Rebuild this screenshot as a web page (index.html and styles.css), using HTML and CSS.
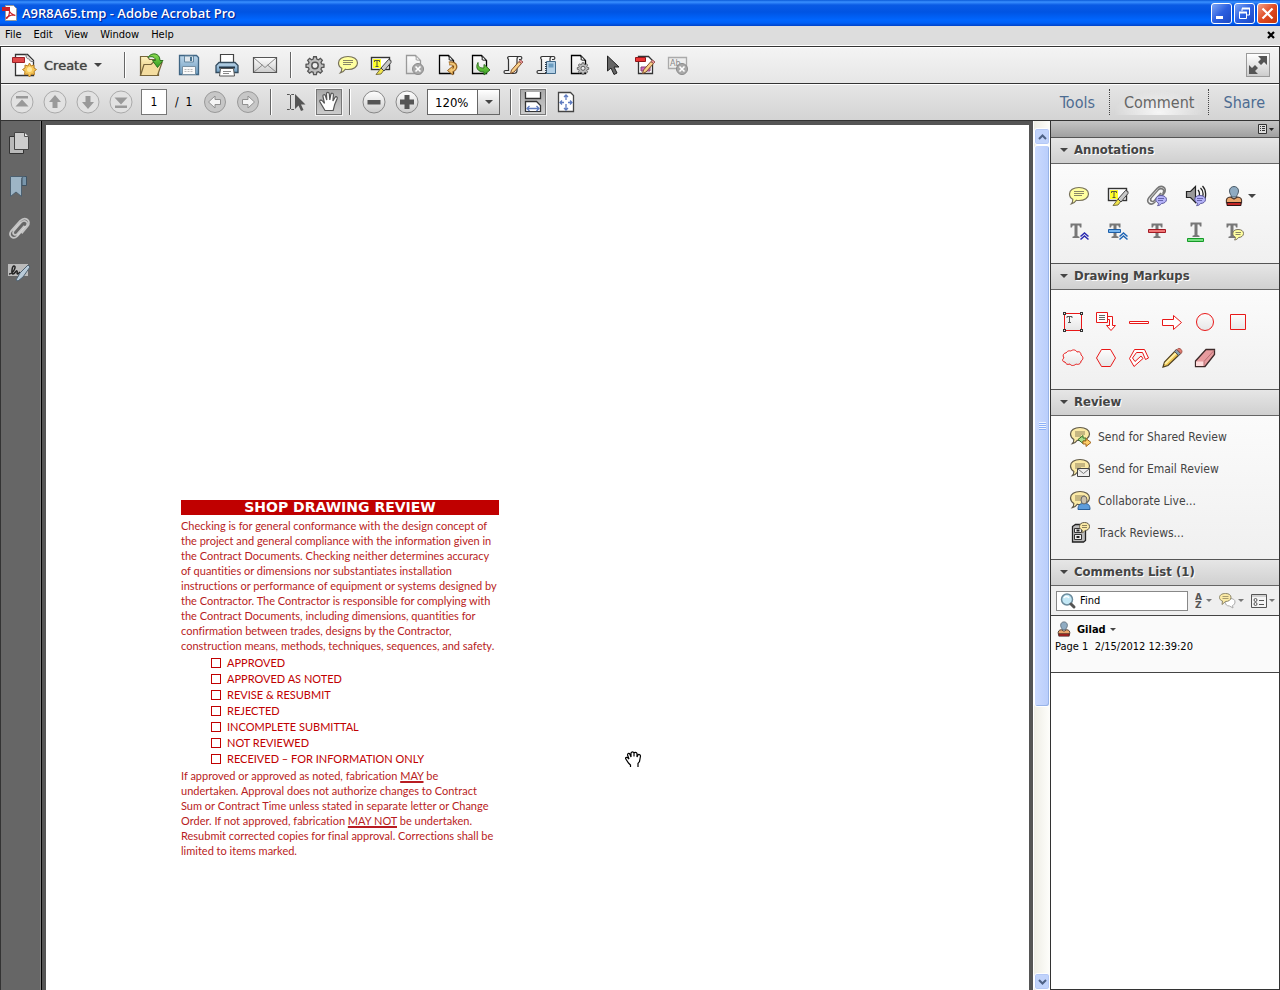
FILE: index.html
```
<!DOCTYPE html>
<html lang="en">
<head>
    <meta charset="UTF-8">
    <meta name="viewport" content="width=device-width, initial-scale=1.0">
    <title>A9R8A65.tmp - Adobe Acrobat Pro</title>
    <link rel="stylesheet" href="styles.css">
</head>
<body>
    <!-- Shared icon parts -->
    <svg class="defs" width="0" height="0" aria-hidden="true">
        <defs>
            <linearGradient id="g-silver" x1="0" y1="0" x2="0" y2="1"><stop offset="0" stop-color="#fff"/><stop offset="1" stop-color="#ccc"/></linearGradient>
            <linearGradient id="g-light" x1="0" y1="0" x2="0" y2="1"><stop offset="0" stop-color="#fdfdfd"/><stop offset="1" stop-color="#e6e6e6"/></linearGradient>
            <linearGradient id="g-folder" x1="0" y1="0" x2="0" y2="1"><stop offset="0" stop-color="#fff3c0"/><stop offset="1" stop-color="#dfc070"/></linearGradient>
            <linearGradient id="g-green" x1="0" y1="0" x2="0" y2="1"><stop offset="0" stop-color="#8ede50"/><stop offset="1" stop-color="#2f9a20"/></linearGradient>
            <linearGradient id="g-blue" x1="0" y1="0" x2="0" y2="1"><stop offset="0" stop-color="#bcd6ea"/><stop offset="1" stop-color="#6d9cc0"/></linearGradient>
        </defs>
        <symbol id="doc" viewBox="0 0 24 24">
            <path d="M4.500 2.500h9l5 5v13h-14z" fill="url(#g-light)" stroke="currentColor" stroke-width="1.300"/>
            <path d="M13.500 2.500c1.500 2 0 4 1 4.500s2.500-.500 4 1" fill="#eee" stroke="currentColor"/>
        </symbol>
        <symbol id="bubble" viewBox="0 0 24 24">
            <path d="M12 3.500c5.500 0 9.500 2.700 9.500 6.500s-4 6.500-9.500 6.500c-1 0-2 0-2.700-.2-1.200 2-2.800 3.200-5 3.500 1.200-1.200 1.600-2.700 1.500-4.500C3.700 14.200 2.500 12.400 2.500 10c0-3.800 4-6.500 9.500-6.500z" fill="#ffffa0" stroke="#77715a" stroke-width="1.200"/>
            <path d="M7 7.500h10M7 9.500h10M7 11.500h8" stroke="#8a8768"/>
        </symbol>
        <symbol id="tan-bubble" viewBox="0 0 24 24">
            <path d="M11 2.500c5.500 0 9.500 2.500 9.500 6.500 0 3.800-4 6.500-9.500 6.500-1 0-2 0-2.700-.2-1.200 2-2.800 3-5 3.300 1.200-1.200 1.600-2.700 1.500-4.200C2.700 13 1.500 11.200 1.500 9c0-4 4-6.500 9.500-6.500z" fill="#fbeaa6" stroke="#605a4a" stroke-width="1.200"/>
            <path d="M6 7h10M6 9h10M6 11h6" stroke="#8f825c"/>
        </symbol>
        <symbol id="gear" viewBox="0 0 24 24">
            <path d="M10.500 3h3l.5 2.600 1.700.7 2.200-1.500 2.100 2.100-1.500 2.200.7 1.700 2.600.5v3l-2.600.5-.7 1.700 1.500 2.200-2.100 2.100-2.200-1.500-1.700.7-.5 2.600h-3l-.5-2.600-1.700-.7-2.200 1.500L4 18.700l1.500-2.200-.7-1.700-2.600-.5v-3l2.600-.5.7-1.700L4 6.900l2.100-2.100 2.200 1.500 1.700-.7z" fill="#bdbdbd" stroke="#555" stroke-width="1.400"/>
            <circle cx="12" cy="12.500" r="3.500" fill="#eee" stroke="#555" stroke-width="1.600"/>
        </symbol>
        <symbol id="marker" viewBox="0 0 24 24">
            <rect x="2.500" y="4.500" width="18" height="12" fill="#fff" stroke="#333" stroke-width="1.400"/>
            <rect x="4" y="6" width="8" height="9" fill="#ffff2a"/>
            <path d="M5.500 9V7.500h5V9M8 7.500v6M6.500 13.500h3" fill="none" stroke="#554"/>
            <path d="M9 19l3-4 3 2-3 4-5 .5z" fill="#f1e44a" stroke="#777043"/>
            <path d="M12 15l7.500-8.500 2.500 1v2L15 18z" fill="#c9c9c9" stroke="#444"/>
        </symbol>
        <symbol id="xbadge" viewBox="0 0 24 24">
            <circle cx="16" cy="16" r="5.500" fill="#a9a9a9" stroke="#8a8a8a"/>
            <path d="M13.500 13.500l5 5M18.500 13.500l-5 5" stroke="#fff" stroke-width="1.600"/>
        </symbol>
        <symbol id="pencil" viewBox="0 0 24 24">
            <path d="M9.500 20.500l1-3.500 7.500-8.500 2.500 2-7.500 8.500z" fill="#f8cf88" stroke="#80502c"/>
            <path d="M18 8.500l1.500-1.500 2.500 2-1.500 1.500z" fill="#e99" stroke="#955"/>
        </symbol>
        <symbol id="scroll" viewBox="0 0 24 24">
            <path d="M7.500 3.500h10.500v13c0 3-2 4-3.500 4H4.500c-2 0-2-3 0-3h3z" fill="url(#g-light)"/>
            <path d="M18 6.500h1.500c1.800 0 1.800-3 0-3H8.500c-2 0-2.500 1.500-1 3v11h-3c-2 0-2 3 0 3h8c2 0 3.500-1 3.500-3v-11c0-2 .5-3 2-3" fill="none" stroke="#333" stroke-width="1.200"/>
        </symbol>
        <symbol id="tee" viewBox="0 0 24 24">
            <path d="M3.500 3.500h11v4h-1.500l-.7-2h-1.800v10.500l2 .7v1.300H5.500v-1.300l2-.7V5.500H5.700L5 7.500H3.500z" fill="#777"/>
        </symbol>
        <symbol id="violet" viewBox="0 0 24 24">
            <path d="M16 11.500c3 0 5.500 1.500 5.500 4s-2.500 4-5 4c-1 1.500-2 2-4 2.200.8-.8 1-1.500.8-2.700-1.600-.7-2.500-2-2.500-3.500 0-2.500 2-4 5.200-4z" fill="#b4b2f8" stroke="#5d5a9c"/>
            <path d="M13 14.500h6M13 16.500h5" stroke="#6663ac"/>
        </symbol>
        <symbol id="clip" viewBox="0 0 24 24">
            <path d="M6 14l7-8c3-3 7.500-.5 5 3l-8.500 9.500c-4 4-9-.5-5.500-5L12 4.500c4.500-4.500 11-.5 7 5L13.500 16M6 14c-1.500 3 1.500 4.500 3.500 2.500L16 9" fill="none" stroke="currentColor" stroke-width="1.600"/>
            <path d="M5 14L12.500 5.500M9.500 18l8-9" stroke="#ddd" stroke-width=".7"/>
        </symbol>
        <symbol id="stamp" viewBox="0 0 24 24">
            <path d="M9.500 13c0-2-2-3-2-6 0-6 9-6 9 0 0 3-2 4-2 6z" fill="#8fabc2" stroke="#4b5b68"/>
            <path d="M4.500 19c-1-4 1-6 4-6l3.500 2 3.500-2c3 0 5 2 4 6z" fill="#eaa66c" stroke="#47342b" stroke-width="1.200"/>
            <path d="M5 18.500h14v3H5z" fill="#c52626" stroke="#2e1717"/>
        </symbol>
        <symbol id="nav-disc" viewBox="0 0 24 24">
            <circle cx="12" cy="12" r="11" fill="#e2e2e2" stroke="#aaa"/>
        </symbol>
    </svg>

    <header class="titlebar">
        <svg class="app-icon" width="16" height="18" viewBox="0 0 16 18">
            <path d="M3.500 1.500h8l3 3v12h-11z" fill="#fff" stroke="#999"/>
            <path d="M0 3h8v4H0z" fill="#c92127"/>
            <path d="M7.500 7.500c0 3-1.500 6.500-3 7-1.500-.5 4-4 8-3.500 2 1-3-.2-5-3.500z" fill="none" stroke="#c92127" stroke-width="1.200"/>
        </svg>
        <h1>A9R8A65.tmp - Adobe Acrobat Pro</h1>
        <div class="window-buttons">
            <button type="button" aria-label="Minimize"><svg width="19" height="19" viewBox="0 0 19 19"><path d="M4 12h7v3H4z" fill="#fff"/></svg></button>
            <button type="button" aria-label="Restore"><svg width="19" height="19" viewBox="0 0 19 19"><path d="M7 7V4.500h7.500V11H12M4.500 8.500h7v6h-7z" fill="none" stroke="#fff"/><path d="M7 4.500h8M4 8.500h8" stroke="#fff" stroke-width="2"/></svg></button>
            <button type="button" class="close" aria-label="Close"><svg width="19" height="19" viewBox="0 0 19 19"><path d="M4.500 4.500l10 10M14.500 4.500l-10 10" stroke="#fff" stroke-width="2.200"/></svg></button>
        </div>
    </header>

    <nav class="menubar">
        <button type="button">File</button>
        <button type="button">Edit</button>
        <button type="button">View</button>
        <button type="button">Window</button>
        <button type="button">Help</button>
        <button type="button" class="close-doc" aria-label="Close document"><svg width="8" height="8" viewBox="0 0 8 8"><path d="M1 1l6 6M7 1L1 7" stroke="#000" stroke-width="2.200"/></svg></button>
    </nav>

    <div class="toolbar file-toolbar">
        <button type="button" class="create">
            <svg width="26" height="26" viewBox="0 0 26 26">
                <path d="M4.500 2.500h12l6 6v15h-18z" fill="#fdfdfd" stroke="#333" stroke-width="1.300"/>
                <path d="M15 2.500c0 5 2 4 3 4.500s0 3 4.500 2.500" fill="#ddd" stroke="#777"/>
                <path d="M1.500 5.500h12v5h-12z" fill="#e04848" stroke="#9e2228"/>
                <path d="M18.500 11l1.500 3 3-1v3l2.500 1.500-2.500 2 .5 3-3-.5-2 3-1.800-3-3.200.5.500-3-2.500-2 2.500-1.500V13l3 1z" fill="#f7c85a" stroke="#b97f22"/>
                <circle cx="18.500" cy="17.500" r="2.500" fill="#ffeaa0"/>
            </svg>
            <span>Create</span>
            <i class="arrow"></i>
        </button>
        <span class="separator"></span>
        <div class="tools wide">
            <button type="button" aria-label="Open">
                <svg width="26" height="26" viewBox="0 0 26 26">
                    <path d="M2.500 23.500v-19h7l2 3h9v16z" fill="url(#g-folder)" stroke="#76643a" stroke-width="1.200"/>
                    <path d="M2.500 23.500L6 12.500h7l2-2h9l-4.500 13z" fill="#f4dda0" stroke="#76643a" stroke-width="1.200"/>
                    <path d="M10 5.500c3-5.500 12-5 12 3h3l-5.500 7-5-7h3c0-3-3.500-5-7.500-3z" fill="url(#g-green)" stroke="#2e7220"/>
                </svg>
            </button>
            <button type="button" aria-label="Save">
                <svg width="24" height="24" viewBox="0 0 24 24">
                    <path d="M2.500 2.500h17l2 2v17h-19z" fill="url(#g-blue)" stroke="#3f6583" stroke-width="1.300"/>
                    <path d="M7.500 3h9v6h-9z" fill="#dfe7ed" stroke="#6587a0"/><path d="M13 4h2v4h-2z" fill="#47728f"/>
                    <path d="M5.500 13.500h13v8h-13z" fill="#fafafa" stroke="#7890a2"/>
                    <path d="M7.500 16.500h9M7.500 18.500h9" stroke="#bbb" stroke-dasharray="2 1"/>
                </svg>
            </button>
            <button type="button" aria-label="Print">
                <svg width="26" height="26" viewBox="0 0 26 26">
                    <path d="M6.500 12V2.500h13V12" fill="#fff" stroke="#444" stroke-width="1.200"/>
                    <path d="M5 10.500h16l3 3v7H2v-7z" fill="url(#g-blue)" stroke="#334b5e" stroke-width="1.300"/>
                    <path d="M5 15.500h16" stroke="#253746" stroke-width="2"/>
                    <path d="M6.500 16.500h13l1 7.500H5.500z" fill="#fff" stroke="#555"/>
                    <path d="M9 19.500h8M9 21.500h6" stroke="#888"/>
                </svg>
            </button>
            <button type="button" aria-label="Email">
                <svg width="26" height="26" viewBox="0 0 26 26"><path d="M1.500 5.500h23v15h-23z" fill="url(#g-silver)" stroke="#555" stroke-width="1.200"/><path d="M2 6l11 9.500L24 6M2 20l8.500-7M24 20l-8.500-7" fill="none" stroke="#888"/></svg>
            </button>
        </div>
        <span class="separator"></span>
        <div class="tools">
            <button type="button" aria-label="Customize"><svg width="22" height="22"><use href="#gear"/></svg></button>
            <button type="button" aria-label="Sticky note"><svg width="24" height="24"><use href="#bubble"/></svg></button>
            <button type="button" aria-label="Highlight text"><svg width="24" height="24"><use href="#marker"/></svg></button>
            <button type="button" class="disabled" disabled aria-label="Delete page"><svg width="24" height="24"><use href="#doc"/><use href="#xbadge"/></svg></button>
            <button type="button" aria-label="Rotate page"><svg width="24" height="24" viewBox="0 0 24 24"><use href="#doc"/><path d="M14 10.500c8-1.500 8.500 6.500 2 7" fill="none" stroke="#956326" stroke-width="4"/><path d="M18 13v9l-5.500-4.500z" fill="#f0bf69" stroke="#956326"/><path d="M14.500 10.500c7-1 7.500 6.500 1.500 7" fill="none" stroke="#f4c876" stroke-width="2"/></svg></button>
            <button type="button" aria-label="Extract page"><svg width="24" height="24" viewBox="0 0 24 24"><use href="#doc"/><path d="M10 9.500c0 5 2 5.500 6 5.500v-3.500l6 5.500-6 5v-3c-6 0-9-4-6-9.500z" fill="url(#g-green)" stroke="#2e7220"/></svg></button>
            <button type="button" aria-label="Edit page"><svg width="24" height="24"><use href="#scroll"/><use href="#pencil"/></svg></button>
            <button type="button" aria-label="Form"><svg width="24" height="24" viewBox="0 0 24 24"><use href="#scroll"/><path d="M12.500 8.500h9v12h-9z" fill="#b3d0e6" stroke="#426b8b"/><path d="M14.500 10.500h5v4h-5z" fill="#6a9cc0"/><path d="M12 9v12" stroke="#345" stroke-dasharray="1 1" stroke-width="2"/></svg></button>
            <button type="button" aria-label="Page settings"><svg width="24" height="24" viewBox="0 0 24 24"><use href="#doc"/><use href="#gear" x="9" y="8" width="14" height="14"/></svg></button>
            <button type="button" aria-label="Select object"><svg width="24" height="24" viewBox="0 0 24 24"><path d="M7.500 3v15l3.500-3 3 6.500 3-1.500-3-6h5z" fill="#666" stroke="#222"/></svg></button>
            <button type="button" aria-label="Edit PDF"><svg width="24" height="24" viewBox="0 0 24 24"><path d="M5.500 3.500h10l4 4v13h-14z" fill="#fff" stroke="#333" stroke-width="1.300"/><path d="M2.500 4.500h10v4h-10z" fill="#ed3434" stroke="#8f171b"/><path d="M8 14h9v4H8z" fill="#d36ac1" stroke="#884077"/><use href="#pencil"/></svg></button>
            <button type="button" class="disabled" disabled aria-label="Remove text"><svg width="24" height="24" viewBox="0 0 24 24"><path d="M2.500 4.500h18v11h-18z" fill="#eee" stroke="#aaa" stroke-width="1.300"/><text x="4" y="13" class="ab">Ab</text><use href="#xbadge"/></svg></button>
        </div>
        <button type="button" class="expand" aria-label="Full screen"><svg width="20" height="20" viewBox="0 0 20 20"><path d="M10 1h9v9l-3-3-3 3-3-3 3-3zM1 10l3 3 3-3 3 3-3 3 3 3H1z" fill="#555"/></svg></button>
    </div>

    <div class="toolbar page-toolbar">
        <div class="tools">
            <button type="button" aria-label="First page"><svg width="24" height="24" viewBox="0 0 24 24"><use href="#nav-disc"/><path d="M6 6h12v2.500H6zM12 9.500l6.500 7h-13z" fill="#999"/></svg></button>
            <button type="button" aria-label="Previous page"><svg width="24" height="24" viewBox="0 0 24 24"><use href="#nav-disc"/><path d="M12 5l6 7h-3.500v6h-5v-6H6z" fill="#999"/></svg></button>
            <button type="button" aria-label="Next page"><svg width="24" height="24" viewBox="0 0 24 24"><use href="#nav-disc"/><path d="M12 19l6-7h-3.500V6h-5v6H6z" fill="#999"/></svg></button>
            <button type="button" aria-label="Last page"><svg width="24" height="24" viewBox="0 0 24 24"><use href="#nav-disc"/><path d="M6 15.500h12V18H6zM12 14.500l6.500-7h-13z" fill="#999"/></svg></button>
        </div>
        <input class="page-number" type="text" value="1" aria-label="Page number">
        <span class="page-count">/&nbsp; 1</span>
        <div class="tools">
            <button type="button" aria-label="Previous view"><svg width="24" height="24" viewBox="0 0 24 24"><circle cx="12" cy="12" r="10.500" fill="#c7c7c7" stroke="#999"/><path d="M5.500 12l6.500-6v3.500h5.500v5H12V18z" fill="#f4f4f4" stroke="#909090"/></svg></button>
            <button type="button" aria-label="Next view"><svg width="24" height="24" viewBox="0 0 24 24"><circle cx="12" cy="12" r="10.500" fill="#c7c7c7" stroke="#999"/><path d="M18.500 12L12 6v3.500H6.500v5H12V18z" fill="#f4f4f4" stroke="#909090"/></svg></button>
        </div>
        <span class="separator"></span>
        <div class="tools modes">
            <button type="button" aria-label="Select tool"><svg width="24" height="24" viewBox="0 0 24 24"><path d="M2 4.500h2.500l1 1 1-1H9M5.500 5v14M2 19.500h2.500l1-1 1 1H9" fill="none" stroke="#555"/><path d="M10 4v15l3.500-3.500 2.500 5.500 2.500-1-2.500-5.500h4.500z" fill="#555"/></svg></button>
            <button type="button" class="boxed" aria-label="Hand tool"><svg width="24" height="24" viewBox="0 0 24 24"><path d="M8 20.500l-5-8.500c-1-2 1.500-2.500 2.500-1l2 2.500L6 6.500c-.5-2 2-2.500 2.500-.5l1.300 4L9.500 4c0-2.300 2.500-2.300 2.800 0l.5 6 1-5.500c.5-2 2.800-1.500 2.600.5l-.5 6 2-3.500c1-1.500 2.800-.5 2.300 1l-2.500 6-1.500 6z" fill="#fff" stroke="#555" stroke-width="1.200"/></svg></button>
        </div>
        <span class="separator"></span>
        <div class="tools">
            <button type="button" aria-label="Zoom out"><svg width="24" height="24" viewBox="0 0 24 24"><circle cx="12" cy="12" r="11" fill="url(#g-silver)" stroke="#888"/><path d="M5.500 10h13v4.500h-13z" fill="#555"/></svg></button>
            <button type="button" aria-label="Zoom in"><svg width="24" height="24" viewBox="0 0 24 24"><circle cx="12" cy="12" r="11" fill="url(#g-silver)" stroke="#888"/><path d="M9.500 5h5v4.500H19v5h-4.500V19h-5v-4.500H5v-5h4.500z" fill="#555"/></svg></button>
        </div>
        <div class="zoom">
            <select aria-label="Zoom level">
                <option>120%</option>
            </select>
            <span class="zoom-button"><i class="arrow"></i></span>
        </div>
        <span class="separator"></span>
        <div class="tools modes">
            <button type="button" class="boxed" aria-label="Fit width"><svg width="24" height="24" viewBox="0 0 24 24"><path d="M4.500 2v6.500h15V2" fill="#fff" stroke="#333" stroke-width="1.300"/><path d="M4.500 22V11.500h11l4 4V22" fill="#fff" stroke="#333" stroke-width="1.300"/><path d="M5 21.500h14" stroke="#333"/><path d="M6 18.500h12M8.500 16L6 18.500 8.500 21M15.500 16l2.500 2.500-2.500 2.500" fill="none" stroke="#5f7cc0" stroke-width="1.300"/></svg></button>
            <button type="button" aria-label="Fit page"><svg width="24" height="24" viewBox="0 0 24 24"><path d="M4.500 2.500h12l3 3v16h-15z" fill="#fff" stroke="#444" stroke-width="1.300"/><path d="M12 5v5M12 14v6M6 12.500h4M14 12.500h4M10 7l2-2 2 2M10 18l2 2 2-2M8 10.500l-2 2 2 2M16 10.500l2 2-2 2" fill="none" stroke="#5f7cc0" stroke-width="1.300"/></svg></button>
        </div>
        <div class="tabs">
            <button type="button">Tools</button>
            <button type="button" class="active">Comment</button>
            <button type="button">Share</button>
        </div>
    </div>

    <main class="workspace">
        <nav class="sidebar">
            <button type="button" aria-label="Page thumbnails"><svg width="24" height="24" viewBox="0 0 24 24"><path d="M2.500 5.500h14v17h-14z" fill="#b9b9b9" stroke="#333"/><path d="M7.500 1.500h10l4 4v13h-14z" fill="#cdcdcd" stroke="#444"/><path d="M17.500 1.500v4h4" fill="#eee" stroke="#555"/></svg></button>
            <button type="button" aria-label="Bookmarks"><svg width="24" height="24" viewBox="0 0 24 24"><path d="M15 2.500h4.500v9H15z" fill="#7895aa" stroke="#3f5362"/><path d="M3.500 2.500h14c-2 0-3 1-3 3v17L9 18l-5.500 4.500z" fill="#9db5c6" stroke="#4c6070"/></svg></button>
            <button type="button" class="attachments" aria-label="Attachments"><svg width="25" height="26" viewBox="1 0 21 24"><use href="#clip" width="24" height="24"/></svg></button>
            <button type="button" aria-label="Signatures"><svg width="26" height="24" viewBox="0 0 26 24"><path d="M2 4h20v12H2z" fill="#bbb"/><path d="M3 14c4 0 8-8 5-8-2 0-3 8-1 8s3-4 4-3-1 3 1 3l2-2" fill="none" stroke="#222" stroke-width="1.500"/><path d="M10 20l4-7L22 5l2 2-7 10-5 4z" fill="#b8cad8" stroke="#4f6170"/></svg></button>
        </nav>

        <section class="viewer">
            <div class="page">
                <form class="stamp-block">
                    <h2>SHOP DRAWING REVIEW</h2>
                    <p>Checking is for general conformance with the design concept of<br>
                    the project and general compliance with the information given in<br>
                    the Contract Documents. Checking neither determines accuracy<br>
                    of quantities or dimensions nor substantiates installation<br>
                    instructions or performance of equipment or systems designed by<br>
                    the Contractor. The Contractor is responsible for complying with<br>
                    the Contract Documents, including dimensions, quantities for<br>
                    confirmation between trades, designs by the Contractor,<br>
                    construction means, methods, techniques, sequences, and safety.</p>
                    <ul>
                        <li><label><input type="checkbox">APPROVED</label></li>
                        <li><label><input type="checkbox">APPROVED AS NOTED</label></li>
                        <li><label><input type="checkbox">REVISE &amp; RESUBMIT</label></li>
                        <li><label><input type="checkbox">REJECTED</label></li>
                        <li><label><input type="checkbox">INCOMPLETE SUBMITTAL</label></li>
                        <li><label><input type="checkbox">NOT REVIEWED</label></li>
                        <li><label><input type="checkbox">RECEIVED – FOR INFORMATION ONLY</label></li>
                    </ul>
                    <p>If approved or approved as noted, fabrication <u>MAY</u> be<br>
                    undertaken. Approval does not authorize changes to Contract<br>
                    Sum or Contract Time unless stated in separate letter or Change<br>
                    Order. If not approved, fabrication <u>MAY NOT</u> be undertaken.<br>
                    Resubmit corrected copies for final approval. Corrections shall be<br>
                    limited to items marked.</p>
                </form>
                <svg class="hand-cursor" width="17" height="17" viewBox="0 0 17 17"><path d="M5.500 16v-2l-2-2-3-4.500c0-1.500 2-1.500 3 0l.5.500L2.500 4c0-2 2-2 2.500-.5L6 6V2c.5-1.500 2.500-1.500 3 0v3.500V2c.5-1 2.500-1 3 .5V6l1-2c.5-1 2.500-.5 2.500 1l-1 5.500-1.500 2V16" fill="#fff" stroke="#000" stroke-width="1.200"/></svg>
            </div>
        </section>

        <div class="scrollbar">
            <button type="button" aria-label="Scroll up"><svg width="9" height="6" viewBox="0 0 9 6"><path d="M1 5l3.500-3.500L8 5" fill="none" stroke="#4d6185" stroke-width="2"/></svg></button>
            <div class="thumb"><span class="grip"></span></div>
            <div class="track"></div>
            <button type="button" aria-label="Scroll down"><svg width="9" height="6" viewBox="0 0 9 6"><path d="M1 1l3.500 3.500L8 1" fill="none" stroke="#4d6185" stroke-width="2"/></svg></button>
        </div>

        <aside class="panel">
            <div class="panel-bar">
                <button type="button" aria-label="Panel options"><svg width="16" height="10" viewBox="0 0 16 10"><path d="M.5.500h8v9h-8z" fill="#ddd" stroke="#333"/><path d="M2 2.500h1M4 2.500h3M2 4.500h1M4 4.500h3M2 6.500h1M4 6.500h3" stroke="#333"/><path d="M11 4h5l-2.500 3z" fill="#222"/></svg></button>
            </div>

            <h3><i class="arrow"></i>Annotations</h3>
            <div class="panel-body annotations">
                <button type="button" aria-label="Sticky note"><svg width="24" height="24"><use href="#bubble"/></svg></button>
                <button type="button" aria-label="Highlight text"><svg width="24" height="24"><use href="#marker"/></svg></button>
                <button type="button" aria-label="Attach file"><svg width="24" height="24"><use href="#clip"/><use href="#violet"/></svg></button>
                <button type="button" aria-label="Record audio"><svg width="24" height="24" viewBox="0 0 24 24"><path d="M2.500 7.500h4l5-5v16l-5-5h-4z" fill="#999" stroke="#222" stroke-width="1.200"/><path d="M14 6c2 2 2 6 0 8M16.500 4c3.500 3 3.500 9 0 12M18.500 2c4 4 4 12 1 15" fill="none" stroke="#222" stroke-width="1.300"/><use href="#violet"/></svg></button>
                <button type="button" class="with-arrow" aria-label="Add stamp"><svg width="24" height="24"><use href="#stamp"/></svg><i class="arrow"></i></button>
                <button type="button" aria-label="Insert text"><svg width="24" height="24" viewBox="0 0 24 24"><use href="#tee"/><path d="M13.500 16.500l4-3.500 4 3.500M13.500 19.500l4-3.500 4 3.500" fill="none" stroke="#2828b0" stroke-width="1.500"/></svg></button>
                <button type="button" aria-label="Replace text"><svg width="24" height="24" viewBox="0 0 24 24"><use href="#tee"/><path d="M2.500 9.500h12v3h-12z" fill="#75b4ee" stroke="#1c5ea8"/><path d="M13.500 16.500l4-3.500 4 3.500M13.500 19.500l4-3.500 4 3.500" fill="none" stroke="#1f65b5" stroke-width="1.500"/></svg></button>
                <button type="button" aria-label="Strikethrough"><svg width="24" height="24" viewBox="0 0 24 24"><use href="#tee" x="3" width="24" height="24"/><path d="M3.500 9.500h17v3h-17z" fill="#ee7777" stroke="#a31923"/></svg></button>
                <button type="button" aria-label="Underline"><svg width="24" height="24" viewBox="0 0 24 24"><use href="#tee" x="3" y="-1" width="24" height="24"/><path d="M3.500 18.500h16v3h-16z" fill="#75df80" stroke="#159a27"/></svg></button>
                <button type="button" aria-label="Add note to text"><svg width="24" height="24" viewBox="0 0 24 24"><use href="#tee"/><path d="M15 9.500c3.500 0 5.500 1.500 5.500 4s-2.500 4-5 4c-1 1.500-2 2.200-4 2.500.8-1 1-2 .8-3-1.500-.7-2.500-2-2.500-3.500 0-2.500 2-4 5.200-4z" fill="#ffffa0" stroke="#77715a"/><path d="M12.500 12.500h5.500M12.500 14.500h5" stroke="#8a8768"/></svg></button>
            </div>

            <h3><i class="arrow"></i>Drawing Markups</h3>
            <div class="panel-body markups">
                <button type="button" aria-label="Text box"><svg width="24" height="24" viewBox="0 0 24 24"><path d="M3.500 3.500h17v17h-17z" fill="url(#g-light)" stroke="#e81818"/><path d="M6 8V6.500h5V8M8.500 6.500v6M7 12.500h3" fill="none" stroke="#555"/><path d="M2 2h3v3H2zM19 2h3v3h-3zM2 19h3v3H2zM19 19h3v3h-3z" fill="#333"/><path d="M3 3h1v1H3zM20 3h1v1h-1zM3 20h1v1H3zM20 20h1v1h-1z" fill="#eee"/></svg></button>
                <button type="button" aria-label="Callout"><svg width="24" height="24" viewBox="0 0 24 24"><path d="M13.500 6.500h5v9h3l-4.500 5-4.500-5h3v-6h-2" fill="#fff" stroke="#e81818"/><path d="M2.500 2.500h11v10h-11z" fill="#fff" stroke="#e81818"/><path d="M5 5.500h6M5 7.500h6M5 9.500h6" stroke="#666"/></svg></button>
                <button type="button" aria-label="Line"><svg width="24" height="24" viewBox="0 0 24 24"><path d="M2.500 11.500h19v2h-19z" fill="#fff" stroke="#e81818"/></svg></button>
                <button type="button" aria-label="Arrow"><svg width="24" height="24" viewBox="0 0 24 24"><path d="M2.500 9.500h11v-4l8 7-8 7v-4h-11z" fill="#fff" stroke="#e81818"/></svg></button>
                <button type="button" aria-label="Oval"><svg width="24" height="24" viewBox="0 0 24 24"><circle cx="12" cy="12" r="8.500" fill="url(#g-light)" stroke="#e81818"/></svg></button>
                <button type="button" aria-label="Rectangle"><svg width="24" height="24" viewBox="0 0 24 24"><path d="M4.500 4.500h15v15h-15z" fill="url(#g-light)" stroke="#e81818"/></svg></button>
                <button type="button" aria-label="Cloud"><svg width="24" height="24" viewBox="0 0 24 24"><path d="M5 7c2-3 4-2 5-2 2-2 5-1 6 1 3-1 4 1 4 3 3 2 2 5 0 6 0 3-3 4-5 3-2 2-5 2-6 0-3 1-4 0-5-2-3 0-3-3-1-4-2-3 0-5 2-5z" fill="url(#g-light)" stroke="#e81818"/></svg></button>
                <button type="button" aria-label="Polygon"><svg width="24" height="24" viewBox="0 0 24 24"><path d="M7.500 3.500h9l5 8.500-5 8.500h-9L2.500 12z" fill="url(#g-light)" stroke="#e81818"/></svg></button>
                <button type="button" aria-label="Connected lines"><svg width="24" height="24" viewBox="0 0 24 24"><path d="M7.500 3.500h10l4 8.500-3 1.500-3-7H9.500L5.500 12 8 15.500l6-5.500 2 2.500-9 8-4.500-8z" fill="#fff" stroke="#e81818"/></svg></button>
                <button type="button" aria-label="Pencil"><svg width="24" height="24" viewBox="0 0 24 24"><path d="M3 21l1.500-5L16 4l4 4L8 19.500z" fill="#edc44f" stroke="#4e4024" stroke-width="1.200"/><path d="M5 18L16.500 6.500" stroke="#fff0a5" stroke-width="2"/><path d="M14.500 5.500l4 4 2-2-4-4z" fill="#8aa0aa" stroke="#555"/><path d="M17 3.500c2-3 7 1 4 4z" fill="#e47c70" stroke="#a45147"/></svg></button>
                <button type="button" aria-label="Eraser"><svg width="24" height="24" viewBox="0 0 24 24"><path d="M2.500 15L13 3.500h8.500v5L12 20.500H2.500z" fill="#e79b9e" stroke="#3d2929" stroke-width="1.300"/><path d="M3 15.500h8v4.500H3z" fill="#ffdcdc"/><path d="M11 20v-4.500l10-11" fill="none" stroke="#b87075"/></svg></button>
            </div>

            <h3><i class="arrow"></i>Review</h3>
            <div class="panel-body review">
                <button type="button"><svg width="24" height="24" viewBox="0 0 24 24"><use href="#tan-bubble"/><path d="M9 14.500l5-4v2.500h3v3h-3v2.500z" fill="#a8dc86" stroke="#376f2a"/><path d="M22 17.500l-5-4v2.500h-3v3h3v2.500z" fill="#ffcf68" stroke="#a26720"/></svg>Send for Shared Review</button>
                <button type="button"><svg width="24" height="24" viewBox="0 0 24 24"><use href="#tan-bubble"/><path d="M8.500 11.500h12v8h-12z" fill="#eee" stroke="#444"/><path d="M9 12l5.500 4.500L20 12" fill="none" stroke="#777"/></svg>Send for Email Review</button>
                <button type="button"><svg width="24" height="24" viewBox="0 0 24 24"><use href="#tan-bubble"/><path d="M9 20.500c0-5 2-6 6-6s6 1 6 6z" fill="#5d9cdb" stroke="#2a5f99"/><ellipse cx="15" cy="11" rx="3" ry="4" fill="#ccc2ac" stroke="#666"/></svg>Collaborate Live...</button>
                <button type="button"><svg width="24" height="24" viewBox="0 0 24 24"><path d="M3.500 5.500l3-2h10v16l-2 1.500h-11z" fill="#bbb" stroke="#222" stroke-width="1.300"/><path d="M5.500 7.500h7v4h-7zM5.500 13.500h7v5h-7z" fill="#eee" stroke="#333"/><path d="M7.500 9.500h3M7.500 16h3" stroke="#222" stroke-width="2"/><path d="M15.500 1.500c3 0 5 1.500 5 4s-2 4-4.500 4c-1 1.500-2 2-3.500 2.200.7-.8.9-1.500.7-2.500-1.700-.7-2.700-2-2.700-3.700 0-2.500 2-4 5-4z" fill="#fbeaa6" stroke="#605a4a"/><path d="M13 4.500h5M13 6.500h5" stroke="#8f825c"/></svg>Track Reviews...</button>
            </div>

            <h3><i class="arrow"></i>Comments List (1)</h3>
            <div class="find-row">
                <div class="find">
                    <svg width="18" height="18" viewBox="0 0 18 18"><circle cx="8" cy="7.500" r="5.500" fill="#c3e8f6" stroke="#6c8b9c" stroke-width="1.500"/><path d="M5 6c1-2 4-2 5 0" fill="none" stroke="#fff" stroke-width="1.500"/><path d="M12 12l3 3" stroke="#555" stroke-width="3" stroke-linecap="round"/></svg>
                    <input type="text" value="Find" aria-label="Find">
                </div>
                <div class="list-tools">
                    <button type="button" aria-label="Sort comments"><svg width="9" height="18" viewBox="0 0 9 18"><text x="0" y="8" class="az">A</text><text x="0" y="16" class="az">Z</text></svg><i class="arrow"></i></button>
                    <button type="button" aria-label="Filter comments"><svg width="17" height="17" viewBox="0 0 17 17"><path d="M11 6.500c3 0 5 1 5 3.500 0 1.500-1 3-2.500 3.500l.5 2.500-3.500-2c-3 0-4-1.500-4-3.500 0-2.500 2-4 4.500-4z" fill="#fff" stroke="#aaa"/><path d="M6.500 1.500c3.500 0 5.500 1.500 5.500 4s-2.500 4-5.500 4l-3.500 3 .5-3.500C1.500 8.500.5 7 .5 5.500c0-2.500 2.500-4 6-4z" fill="#fbeaa6" stroke="#8a8468"/><path d="M3.500 4.500h6M3.500 6.500h6" stroke="#a99d70"/></svg><i class="arrow"></i></button>
                    <button type="button" aria-label="List options"><svg width="16" height="16" viewBox="0 0 16 16"><path d="M.5 1.500h15v13H.5z" fill="#f4f4f4" stroke="#555"/><path d="M1 3h14" stroke="#aaa"/><path d="M8 7.500h5M8 11.500h5" stroke="#555"/><circle cx="4.500" cy="7" r="1.500" fill="none" stroke="#555"/><circle cx="4.500" cy="11" r="1.500" fill="none" stroke="#555"/></svg><i class="arrow"></i></button>
                </div>
            </div>
            <article class="comment">
                <h4><svg width="18" height="18"><use href="#stamp"/></svg>Gilad<i class="arrow"></i></h4>
                <p>Page 1&nbsp; 2/15/2012 12:39:20</p>
            </article>
            <div class="panel-rest"></div>
        </aside>
    </main>
</body>
</html>
```

FILE: styles.css
```
:root {
    --ui-font: "DejaVu Sans Condensed", "DejaVu Sans", sans-serif;
    --line: #333;
    --text: #444;
    --red: #c00000;
}

* {
    box-sizing: border-box;
}

body {
    margin: 0;
    height: 100vh;
    display: flex;
    flex-direction: column;
    overflow: hidden;
    background: #fff;
    color: #000;
    font-family: var(--ui-font);
    font-size: 11px;
}

button {
    display: flex;
    align-items: center;
    justify-content: center;
    padding: 0;
    border: 0;
    background: none;
    color: inherit;
    font: inherit;
    white-space: nowrap;
}

svg {
    display: block;
    flex: none;
}

.defs {
    position: absolute;
}

.arrow {
    flex: none;
    border: 4px solid transparent;
    border-top-color: #444;
    border-bottom: 0;
}

/* Window title */
.titlebar {
    display: flex;
    align-items: center;
    gap: 4px;
    flex: none;
    height: 26px;
    padding: 0 2px;
    background: linear-gradient(#0a5ad8 0, #3a90ff 2px, #0a5be4 5px, #0054e3 12px, #0066ff 20px, #0060f6 23px, #0042c8 26px);
}

.titlebar h1 {
    margin: 0;
    flex: 1;
    color: #fff;
    font-family: "Open Sans", sans-serif;
    font-size: 13px;
    font-weight: 600;
    text-shadow: 1px 1px 1px #0a1883;
}

.window-buttons {
    display: flex;
    gap: 2px;
}

.window-buttons button {
    width: 21px;
    height: 21px;
    border: 1px solid #fff;
    border-radius: 3px;
    background: linear-gradient(135deg, #7ea6f5, #2b5fe0 50%, #1c49c4);
}

.window-buttons .close {
    background: linear-gradient(135deg, #f0a088, #e04a22 50%, #c33409);
}

/* Menu */
.menubar {
    display: flex;
    align-items: center;
    gap: 12px;
    flex: none;
    height: 20px;
    padding: 0 5px 2px;
    background: #ddd;
    border-bottom: 1px solid #fff;
}

.menubar .close-doc {
    margin-left: auto;
}

/* Toolbars */
.toolbar {
    display: flex;
    align-items: center;
    flex: none;
    border: 1px solid var(--line);
    border-bottom: 0;
    box-shadow: inset 0 1px #fff;
}

.file-toolbar {
    height: 37px;
    padding: 0 9px 0 10px;
    background: linear-gradient(#f4f4f4, #e6e6e6);
}

.page-toolbar {
    height: 38px;
    padding: 0 0 0 4px;
    background: linear-gradient(#e6e6e6, #d4d4d4);
    border-bottom: 1px solid var(--line);
}

.create {
    gap: 7px;
    color: var(--text);
    font-family: "DejaVu Sans", sans-serif;
    font-size: 13px;
    text-shadow: 0 0 1px var(--text);
}

.separator {
    width: 2px;
    height: 26px;
    margin: 0 6px;
    background: linear-gradient(90deg, #666 50%, #fff 50%);
}

.create + .separator {
    margin-left: 22px;
}

.tools {
    display: flex;
    align-items: center;
}

.tools button {
    width: 33px;
    height: 26px;
}

.tools.wide button {
    width: 38px;
}

.tools .disabled {
    color: #999;
}

.tools .boxed {
    width: 26px;
    border: 1px solid #777;
    background: linear-gradient(#aaa, #ccc);
    box-shadow: 0 0 0 1px #f4f4f4;
}

.modes {
    gap: 3px;
    padding: 0 1px 0 2px;
}

.ab {
    font: 8px "DejaVu Sans", sans-serif;
    fill: #888;
}

.expand {
    width: 24px;
    height: 24px;
    margin-left: auto;
    border: 1px solid #999;
    background: linear-gradient(#fff, #ccc);
}

.page-number {
    width: 26px;
    height: 26px;
    margin: 0 8px 0 4px;
    padding: 0;
    border: 1px solid #777;
    text-align: center;
    font-family: var(--ui-font);
    font-size: 12px;
}

.page-count {
    width: 23px;
    font-size: 12px;
}

.zoom {
    position: relative;
    margin: 0 4px;
}

.zoom select {
    appearance: none;
    display: block;
    width: 73px;
    height: 26px;
    padding: 0 0 0 7px;
    border: 1px solid #666;
    border-radius: 0;
    background: #fff;
    color: #000;
    font-family: var(--ui-font);
    font-size: 13px;
}

.zoom-button {
    position: absolute;
    top: 1px;
    right: 1px;
    bottom: 1px;
    width: 22px;
    display: flex;
    align-items: center;
    justify-content: center;
    border-left: 1px solid #666;
    background: linear-gradient(#fff, #ccc);
    pointer-events: none;
}

.tabs {
    display: flex;
    align-items: center;
    margin-left: auto;
    color: #4d6c92;
    font-size: 16px;
    text-shadow: 1px 1px #fff;
}

.tabs button {
    height: 26px;
    padding: 0 14px;
}

.tabs .active {
    color: #666;
    background: radial-gradient(ellipse at 50% 90%, #f6f6f6, transparent 65%);
}

.tabs button + button {
    border-left: 1px dotted #444;
}

/* Workspace */
.workspace {
    display: flex;
    flex: 1;
    min-height: 0;
}

.sidebar {
    flex: none;
    width: 42px;
    border-left: 1px solid var(--line);
    border-right: 1px solid #000;
    background: #666;
    box-shadow: inset -1px 0 #808080;
}

.sidebar button {
    width: 36px;
    height: 43px;
}

.sidebar .attachments {
    color: #c4c4c4;
}

.viewer {
    flex: 1;
    min-width: 0;
    padding: 4px 4px 0;
    background: #555;
}

.page {
    position: relative;
    height: 100%;
    padding: 375px 135px 0;
    background: #fff;
}

.stamp-block {
    width: 318px;
    color: #b81c22;
    font-family: "Lato", sans-serif;
    font-size: 11px;
    line-height: 15px;
    font-variant-ligatures: none;
    white-space: nowrap;
}

.stamp-block h2 {
    margin: 0 0 3px;
    background: var(--red);
    color: #fff;
    font-family: "DejaVu Sans", sans-serif;
    font-size: 14px;
    line-height: 15px;
    font-weight: 700;
    text-align: center;
}

.stamp-block p {
    margin: 0;
}

.stamp-block u {
    text-decoration-thickness: 2px;
}

.stamp-block ul {
    margin: 2px 0 1px;
    padding: 0 0 0 30px;
    list-style: none;
    color: var(--red);
    line-height: 16px;
}

.stamp-block label {
    display: flex;
    align-items: center;
    gap: 6px;
}

.stamp-block input {
    appearance: none;
    width: 10px;
    height: 10px;
    margin: 0;
    border: 1px solid var(--red);
}

.hand-cursor {
    position: absolute;
    left: 579px;
    top: 626px;
}

/* Scrollbar */
.scrollbar {
    display: flex;
    flex-direction: column;
    flex: none;
    width: 17px;
    padding-top: 7px;
    background: linear-gradient(90deg, #eeede5, #fefefb);
    border-left: 1px solid #fff;
}

.scrollbar button {
    flex: none;
    height: 17px;
    border: 1px solid #fff;
    border-radius: 3px;
    background: #c1d3fb;
    box-shadow: inset 0 0 0 1px #b4c8f6;
}

.scrollbar .thumb {
    flex: 561;
    display: flex;
    align-items: center;
    justify-content: center;
    border: 1px solid #fff;
    border-radius: 3px;
    background: linear-gradient(90deg, #cbdafe, #b9cdfb);
    box-shadow: inset -1px -1px #98b4e8;
}

.scrollbar .grip {
    width: 7px;
    height: 8px;
    background: repeating-linear-gradient(#eef4fe 0 1px, #8cb0f8 1px 2px);
}

.scrollbar .track {
    flex: 267;
}

/* Comment panel */
.panel {
    display: flex;
    flex-direction: column;
    flex: none;
    width: 230px;
    border: 1px solid var(--line);
    border-top: 0;
}

.panel-bar {
    display: flex;
    justify-content: flex-end;
    align-items: center;
    height: 16px;
    padding: 0 5px;
    background: linear-gradient(#c4c4c4, #a0a0a0);
}

.panel h3 {
    display: flex;
    align-items: center;
    gap: 6px;
    flex: none;
    height: 27px;
    margin: 0;
    padding: 0 0 2px 9px;
    border-top: 1px solid #555;
    border-bottom: 1px solid #666;
    background: linear-gradient(#e6e6e6, #d0d0d0);
    color: var(--text);
    font-size: 13px;
    font-weight: 700;
    text-shadow: 1px 1px #fff;
}

.panel-body {
    background: linear-gradient(#fbfbfb, #f0f0f0);
}

.annotations,
.markups {
    display: grid;
    grid-auto-rows: 36px;
    height: 99px;
    padding-top: 14px;
}

.annotations {
    grid-template-columns: repeat(5, 39px);
    padding-left: 8px;
    color: #777;
}

.markups {
    grid-template-columns: repeat(6, 33px);
    padding-left: 5px;
}

.annotations .with-arrow {
    justify-content: flex-start;
    gap: 2px;
    padding-left: 7px;
}

.review {
    padding: 5px 0 10px 18px;
    color: var(--text);
    font-size: 12px;
}

.review button {
    gap: 5px;
    height: 32px;
}

.find-row {
    display: flex;
    align-items: center;
    justify-content: space-between;
    height: 30px;
    padding: 0 4px 0 5px;
    background: #efefef;
    border-bottom: 1px solid #444;
}

.find {
    display: flex;
    align-items: center;
    gap: 3px;
    width: 132px;
    height: 20px;
    padding-left: 2px;
    border: 1px solid #888;
    background: #fff;
}

.find input {
    flex: 1;
    min-width: 0;
    padding: 0;
    border: 0;
    background: none;
    font-family: var(--ui-font);
    font-size: 11px;
}

.list-tools {
    display: flex;
    gap: 7px;
}

.list-tools button {
    gap: 2px;
}

.list-tools .arrow {
    border-width: 3px 3px 0;
    border-top-color: #777;
}

.az {
    font: 700 9px "DejaVu Sans", sans-serif;
    fill: #555;
}

.comment {
    height: 57px;
    padding: 4px;
    background: #fafafa;
    border-bottom: 1px solid #444;
}

.comment h4 {
    display: flex;
    align-items: center;
    gap: 4px;
    margin: 0;
    font-size: 11px;
}

.comment h4 .arrow {
    border-width: 3px 3px 0;
}

.comment p {
    margin: 2px 0 0;
}

.panel-rest {
    flex: 1;
    background: #fff;
}
```
